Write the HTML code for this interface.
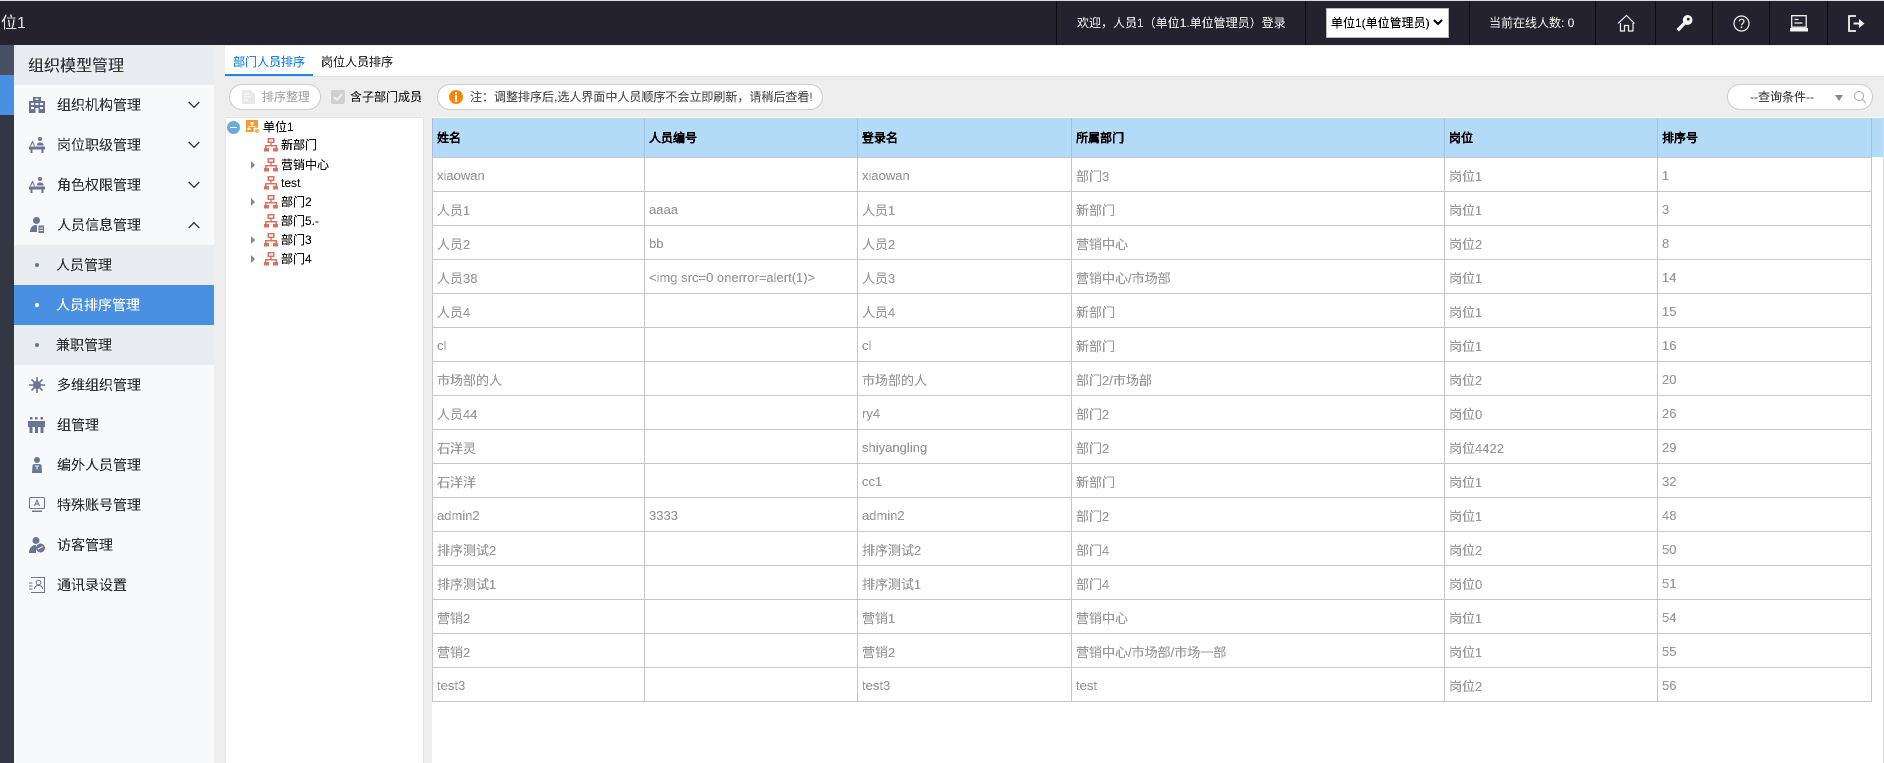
<!DOCTYPE html>
<html><head><meta charset="utf-8"><style>
*{box-sizing:border-box}
html,body{margin:0;padding:0;width:1884px;height:763px;overflow:hidden;background:#eee;font:12px "Liberation Sans","WenQuanYi Zen Hei",sans-serif;color:#222}
.a{position:absolute;white-space:nowrap}
.f,.t,th span,td span,.m span{filter:url(#aa)}
.v{position:absolute;top:1px;height:44px;width:1px;background:#0c0c12}
.m{position:absolute;left:14px;width:200px;height:40px;line-height:40px;font-size:14px;color:#333;background:#f8f9fb;padding-left:43px}
.m span{display:inline-block}
.m.s{background:#e9ecf1;font-size:14px;padding-left:42px}
.m.s:before{content:"";position:absolute;left:21px;top:18px;width:4px;height:4px;border-radius:2px;background:#6c7493}
.m.on{background:#4a90e2;color:#fff}.m.on:before{background:#fff}
.m svg.i{position:absolute;left:15px;top:12px}
.m svg.c{position:absolute;left:174px;top:16px}
.pill{position:absolute;top:84px;height:26px;border:1px solid #ccc;border-radius:13px;background:#fff;line-height:24px}
.t{position:absolute;line-height:19px;height:19px;color:#111}
.ic{position:absolute;left:264px}
.tri{position:absolute;left:251px;width:0;height:0;border-left:4px solid #888;border-top:4px solid transparent;border-bottom:4px solid transparent}
table{position:absolute;left:432px;top:118px;width:1439px;border-collapse:collapse;table-layout:fixed}
th{height:39px;border-right:1px solid #a4bfe0;border-left:1px solid #a4bfe0;text-align:left;font-size:12px;padding:1px 0 0 4px;color:#000;font-weight:bold}
td{height:34px;border:1px solid #c6c6c6;padding:3px 0 0 4px;color:#999;font-size:13px;white-space:nowrap}
</style></head><body>
<svg width="0" height="0" style="position:absolute"><defs>
<filter id="aa" x="0" y="0" width="100%" height="100%" color-interpolation-filters="sRGB"><feComponentTransfer><feFuncA type="discrete" tableValues="0 1 1"/></feComponentTransfer></filter>
<symbol id="org" viewBox="0 0 14 14"><path d="M3.500 0h7v5h-7zM5 1.500v2h4v-2zM6.300 5h1.400v2H13v3h-1.500V8.500h-9V10H1V7h5.300zM0 10h5v3.500H0zM9 10h5v3.500H9z" fill="#d9725f" fill-rule="evenodd"/></symbol>
<symbol id="dn" viewBox="0 0 12 8"><path d="M0.700 1l5.300 5.300 5.300-5.300" fill="none" stroke="#333" stroke-width="1.300"/></symbol>
<symbol id="up" viewBox="0 0 12 8"><path d="M0.700 7l5.300-5.300 5.300 5.300" fill="none" stroke="#333" stroke-width="1.300"/></symbol>
<symbol id="desk" viewBox="0 0 16 16"><circle cx="11" cy="2" r="2" fill="#6c7493"/><path d="M8 8.500c0-2.500 1-3 3-3s3.500.5 3.500 3zM0 9.500h16v3h-1.500V16h-2v-3.500h-9V16h-2v-3.500H0z" fill="#6c7493"/><path d="M1.500 9l2-4.500 2 4.500" fill="none" stroke="#6c7493"/></symbol>
</defs></svg>

<div class="a" style="left:0;top:0;width:1884px;height:45px;background:#23222e;border-top:1px solid #ddd"></div>
<div class="a f" style="left:1px;top:14px;font-size:16px;line-height:20px;color:#ddd">位1</div>
<div class="v" style="left:1056px"></div><div class="v" style="left:1305px"></div><div class="v" style="left:1469px"></div><div class="v" style="left:1595px"></div><div class="v" style="left:1655px"></div><div class="v" style="left:1712px"></div><div class="v" style="left:1769px"></div><div class="v" style="left:1827px"></div>
<div class="a f" style="left:1077px;top:15px;line-height:16px;color:#ddd;font-size:12px">欢迎，人员1（单位1.单位管理员）登录</div>
<div class="a" style="left:1326px;top:8px;width:123px;height:30px;background:#fff;border:1px solid #bbb"></div>
<div class="a f" style="left:1331px;top:15px;color:#000;line-height:16px">单位1(单位管理员)</div>
<svg class="a" style="left:1433px;top:19px" width="10" height="7" viewBox="0 0 10 7"><path d="M1 1l4 4 4-4" fill="none" stroke="#000" stroke-width="2"/></svg>
<div class="a f" style="left:1489px;top:15px;line-height:16px;color:#ddd">当前在线人数: 0</div>
<svg class="a" style="left:1617px;top:14px" width="19" height="18" viewBox="0 0 19 18"><path d="M1 9.500L9.500 1.500l8 8M3.500 9v8h4v-5.500h4V17h4.500V9" fill="none" stroke="#f2f2f2" stroke-width="1.200"/></svg>
<svg class="a" style="left:1676px;top:15px" width="17" height="17" viewBox="0 0 17 17"><path d="M11.500 0A5 5 0 0 1 16.500 5 5 5 0 0 1 9.500 9.500L3 16.500.5 14l6.800-6.800A5 5 0 0 1 11.500 0z" fill="#f6f6f6"/><circle cx="12.300" cy="4.200" r="1.400" fill="#23222e"/></svg>
<svg class="a" style="left:1733px;top:15px" width="17" height="17" viewBox="0 0 17 17"><circle cx="8.500" cy="8.500" r="7.500" fill="none" stroke="#f2f2f2" stroke-width="1.200"/><path d="M6.200 6.500c0-3 4.800-3 4.800-.2 0 2-2.400 1.900-2.400 3.900" fill="none" stroke="#f2f2f2" stroke-width="1.200"/><circle cx="8.500" cy="12.300" r=".9" fill="#f2f2f2"/></svg>
<svg class="a" style="left:1790px;top:15px" width="18" height="17" viewBox="0 0 18 17"><path d="M1.700.7h14.500v11.500H1.700zM4.500 4.500h4M4.500 8h8" fill="none" stroke="#f2f2f2" stroke-width="1.300"/><path d="M0 13h18v3.500H0z" fill="#f2f2f2"/></svg>
<svg class="a" style="left:1848px;top:15px" width="17" height="17" viewBox="0 0 17 17"><path d="M8 1H1v15h7" fill="none" stroke="#f2f2f2" stroke-width="1.800"/><path d="M5.500 7.500h5.500V4l5.500 4.500-5.500 4.500V9.500H5.500z" fill="#f2f2f2"/></svg>

<div class="a" style="left:0;top:45px;width:14px;height:718px;background:#333744"></div>
<div class="a" style="left:0;top:45px;width:14px;height:30px;background:#4a5064"></div>
<div class="a" style="left:0;top:75px;width:14px;height:40px;background:#4a90e2"></div>
<div class="a" style="left:14px;top:45px;width:200px;height:718px;background:#f8f9fb"></div>
<div class="a" style="left:14px;top:45px;width:200px;height:40px;background:#e9ecf1"></div>
<div class="a f" style="left:28px;top:47px;font-size:16px;line-height:40px;color:#333">组织模型管理</div>

<div class="m" style="top:85px"><svg class="i" width="16" height="16" viewBox="0 0 16 16"><path d="M4 0h8v4h4v12H0V4h4zM6.500 1.500V3h3V1.500zM2 6v2h3V6zM11 6v2h3V6zM6.500 6v2h3V6zM2 10v2h3v-2zM11 10v2h3v-2zM6.500 11v5h3v-5z" fill="#6c7493" fill-rule="evenodd"/></svg><span>组织机构管理</span><svg class="c" width="12" height="8"><use href="#dn"/></svg></div>
<div class="m" style="top:125px"><svg class="i" width="16" height="16"><use href="#desk"/></svg><span>岗位职级管理</span><svg class="c" width="12" height="8"><use href="#dn"/></svg></div>
<div class="m" style="top:165px"><svg class="i" width="16" height="16"><use href="#desk"/></svg><span>角色权限管理</span><svg class="c" width="12" height="8"><use href="#dn"/></svg></div>
<div class="m" style="top:205px"><svg class="i" width="16" height="16" viewBox="0 0 16 16"><circle cx="7.500" cy="3.500" r="3.500" fill="#6c7493"/><path d="M1 15c0-4 2-7 6-7 .5 0 1 .3 1 1v6zM9.500 8.500H15V16H9.500z" fill="#6c7493"/><path d="M10.500 11h3.500M10.500 13.500h3.500" stroke="#f8f9fb"/></svg><span>人员信息管理</span><svg class="c" width="12" height="8"><use href="#up"/></svg></div>
<div class="m s" style="top:245px"><span>人员管理</span></div>
<div class="m s on" style="top:285px"><span>人员排序管理</span></div>
<div class="m s" style="top:325px"><span>兼职管理</span></div>
<div class="m" style="top:365px"><svg class="i" width="16" height="16" viewBox="0 0 16 16"><circle cx="8" cy="8" r="4" fill="#6c7493"/><path d="M8 0v16M0 8h16M2.500 2.500l11 11M13.500 2.500l-11 11" stroke="#6c7493" stroke-width="1.600"/></svg><span>多维组织管理</span></div>
<div class="m" style="top:405px"><svg class="i" style="left:14px" width="17" height="16" viewBox="0 0 17 16"><path d="M2 0h2.500v2.500H2zM7 0h2.500v2.500H7zM12.500 0H15v2.500h-2.500zM0 4h17v6h-1.500v6h-3v-6h-2.500v6H7v-6H4.500v6h-3v-6H0z" fill="#6c7493"/></svg><span>组管理</span></div>
<div class="m" style="top:445px"><svg class="i" width="16" height="16" viewBox="0 0 16 16"><circle cx="8" cy="3" r="3" fill="#6c7493"/><path d="M3 16l.5-7.500c0-1 1-1.500 2.500-1.500h4c1.500 0 2.500.5 2.500 1.500L13 16z" fill="#6c7493"/><path d="M6 9h4M8 9v3.500" stroke="#f8f9fb"/></svg><span>编外人员管理</span></div>
<div class="m" style="top:485px"><svg class="i" width="16" height="16" viewBox="0 0 16 16"><rect x=".5" y=".5" width="15" height="11" rx="1.500" fill="none" stroke="#6c7493"/><path d="M5.500 9L8 3l2.500 6M6.500 7h3" fill="none" stroke="#6c7493"/><path d="M3 13.500h10V15H3z" fill="#6c7493"/></svg><span>特殊账号管理</span></div>
<div class="m" style="top:525px"><svg class="i" width="16" height="16" viewBox="0 0 16 16"><circle cx="7" cy="3.500" r="3.500" fill="#6c7493"/><path d="M0 16c0-5 3-8 7-8v8z" fill="#6c7493"/><circle cx="11.500" cy="11" r="4.500" fill="#6c7493"/><path d="M9 12l5-2.500" stroke="#f8f9fb"/></svg><span>访客管理</span></div>
<div class="m" style="top:565px"><svg class="i" width="16" height="16" viewBox="0 0 16 16"><path d="M2 .5h13.500v15H2M0 6h3.500M0 9h3.500M0 12h3.500" fill="none" stroke="#6c7493"/><circle cx="9.500" cy="5.500" r="2.300" fill="none" stroke="#6c7493"/><path d="M5.500 12c0-2.500 1.500-3.500 4-3.500s4 1 4 3.500" fill="none" stroke="#6c7493"/></svg><span>通讯录设置</span></div>

<div class="a" style="left:225px;top:46px;width:1659px;height:31px;background:#fff;border-bottom:1px solid #e0e0e0"></div>
<div class="a f" style="left:233px;top:54px;line-height:16px;color:#1e88e5">部门人员排序</div>
<div class="a" style="left:225px;top:74px;width:88px;height:2px;background:#1e88e5"></div>
<div class="a f" style="left:321px;top:54px;line-height:16px;color:#333">岗位人员排序</div>

<div class="pill" style="left:229px;width:92px"></div>
<svg class="a" style="left:242px;top:90px" width="13" height="14" viewBox="0 0 13 14"><path d="M0 0h9l4 4v10H0z" fill="#e9e9e9"/><path d="M2 4h5M2 7h7M2 10h4" stroke="#fff"/></svg>
<div class="a f" style="left:262px;top:89px;line-height:16px;color:#aaa">排序整理</div>
<div class="a" style="left:331px;top:90px;width:14px;height:14px;background:#cfcfcf;border-radius:2px"></div>
<svg class="a" style="left:331px;top:90px" width="14" height="14"><path d="M3 7l3 3 5-6" fill="none" stroke="#eee" stroke-width="2"/></svg>
<div class="a f" style="left:350px;top:89px;line-height:16px;color:#222">含子部门成员</div>
<div class="pill" style="left:437px;width:386px"></div>
<div class="a" style="left:449px;top:90px;width:14px;height:14px;border-radius:7px;background:#fb8500"></div>
<div class="a" style="left:455px;top:92px;width:2px;height:2px;background:#fff"></div>
<div class="a" style="left:455px;top:95px;width:2px;height:7px;background:#fff"></div>
<div class="a f" style="left:470px;top:89px;line-height:16px;color:#555">注：调整排序后,选人界面中人员顺序不会立即刷新，请稍后查看!</div>
<div class="pill" style="left:1727px;width:146px"></div>
<div class="a f" style="left:1750px;top:89px;line-height:16px;color:#444">--查询条件--</div>
<div class="a" style="left:1835px;top:95px;width:0;height:0;border-top:6px solid #888;border-left:4px solid transparent;border-right:4px solid transparent"></div>
<svg class="a" style="left:1853px;top:90px" width="14" height="14" viewBox="0 0 14 14"><circle cx="6" cy="6" r="4.500" fill="none" stroke="#aaa"/><path d="M9.500 9.500l3.500 3.500" stroke="#aaa"/></svg>

<div class="a" style="left:225px;top:117px;width:199px;height:646px;background:#fff;border:1px solid #e4e4e4;border-bottom:0"></div>
<div class="a" style="left:227px;top:121px;width:13px;height:13px;border-radius:7px;background:#6aa9dc"></div>
<div class="a" style="left:230px;top:127px;width:7px;height:1px;background:#fff"></div>
<svg class="a" style="left:246px;top:120px" width="14" height="14" viewBox="0 0 14 14"><path d="M0 0h12v12H0z" fill="#f79a2c"/><path d="M4.500 2h3v2.500h-3zM5.700 4.500h.7V6h3.100v2h-.7V6.700H3.300V8h-.7V6h3.100zM1.500 8h3v2h-3zM7.500 8h3v2h-3z" fill="#fff"/><circle cx="11" cy="11" r="2.800" fill="#f9b766" stroke="#fff"/></svg>
<div class="t" style="left:263px;top:118px">单位1</div>
<svg class="ic" style="top:138px" width="14" height="14"><use href="#org"/></svg><div class="t" style="left:281px;top:136px">新部门</div>
<i class="tri" style="top:161px"></i><svg class="ic" style="top:158px" width="14" height="14"><use href="#org"/></svg><div class="t" style="left:281px;top:156px">营销中心</div>
<svg class="ic" style="top:176px" width="14" height="14"><use href="#org"/></svg><div class="t" style="left:281px;top:174px">test</div>
<i class="tri" style="top:198px"></i><svg class="ic" style="top:195px" width="14" height="14"><use href="#org"/></svg><div class="t" style="left:281px;top:193px">部门2</div>
<svg class="ic" style="top:214px" width="14" height="14"><use href="#org"/></svg><div class="t" style="left:281px;top:212px">部门5.-</div>
<i class="tri" style="top:236px"></i><svg class="ic" style="top:233px" width="14" height="14"><use href="#org"/></svg><div class="t" style="left:281px;top:231px">部门3</div>
<i class="tri" style="top:255px"></i><svg class="ic" style="top:252px" width="14" height="14"><use href="#org"/></svg><div class="t" style="left:281px;top:250px">部门4</div>

<div class="a" style="left:432px;top:117px;width:1452px;height:646px;background:#fff;border-right:1px solid #ddd"></div>
<div class="a" style="left:432px;top:118px;width:1451px;height:39px;background:#b3dbf7"></div>
<table><colgroup><col style="width:212px"><col style="width:213px"><col style="width:214px"><col style="width:373px"><col style="width:213px"><col style="width:214px"></colgroup>
<tr><th><span>姓名</span></th><th><span>人员编号</span></th><th><span>登录名</span></th><th><span>所属部门</span></th><th><span>岗位</span></th><th><span>排序号</span></th></tr>
<tr><td><span>xiaowan</span></td><td></td><td><span>xiaowan</span></td><td><span>部门3</span></td><td><span>岗位1</span></td><td><span>1</span></td></tr>
<tr><td><span>人员1</span></td><td><span>aaaa</span></td><td><span>人员1</span></td><td><span>新部门</span></td><td><span>岗位1</span></td><td><span>3</span></td></tr>
<tr><td><span>人员2</span></td><td><span>bb</span></td><td><span>人员2</span></td><td><span>营销中心</span></td><td><span>岗位2</span></td><td><span>8</span></td></tr>
<tr><td><span>人员38</span></td><td><span>&lt;img src=0 onerror=alert(1)&gt;</span></td><td><span>人员3</span></td><td><span>营销中心/市场部</span></td><td><span>岗位1</span></td><td><span>14</span></td></tr>
<tr><td><span>人员4</span></td><td></td><td><span>人员4</span></td><td><span>新部门</span></td><td><span>岗位1</span></td><td><span>15</span></td></tr>
<tr><td><span>cl</span></td><td></td><td><span>cl</span></td><td><span>新部门</span></td><td><span>岗位1</span></td><td><span>16</span></td></tr>
<tr><td><span>市场部的人</span></td><td></td><td><span>市场部的人</span></td><td><span>部门2/市场部</span></td><td><span>岗位2</span></td><td><span>20</span></td></tr>
<tr><td><span>人员44</span></td><td></td><td><span>ry4</span></td><td><span>部门2</span></td><td><span>岗位0</span></td><td><span>26</span></td></tr>
<tr><td><span>石洋灵</span></td><td></td><td><span>shiyangling</span></td><td><span>部门2</span></td><td><span>岗位4422</span></td><td><span>29</span></td></tr>
<tr><td><span>石洋洋</span></td><td></td><td><span>cc1</span></td><td><span>新部门</span></td><td><span>岗位1</span></td><td><span>32</span></td></tr>
<tr><td><span>admin2</span></td><td><span>3333</span></td><td><span>admin2</span></td><td><span>部门2</span></td><td><span>岗位1</span></td><td><span>48</span></td></tr>
<tr><td><span>排序测试2</span></td><td></td><td><span>排序测试2</span></td><td><span>部门4</span></td><td><span>岗位2</span></td><td><span>50</span></td></tr>
<tr><td><span>排序测试1</span></td><td></td><td><span>排序测试1</span></td><td><span>部门4</span></td><td><span>岗位0</span></td><td><span>51</span></td></tr>
<tr><td><span>营销2</span></td><td></td><td><span>营销1</span></td><td><span>营销中心</span></td><td><span>岗位1</span></td><td><span>54</span></td></tr>
<tr><td><span>营销2</span></td><td></td><td><span>营销2</span></td><td><span>营销中心/市场部/市场一部</span></td><td><span>岗位1</span></td><td><span>55</span></td></tr>
<tr><td><span>test3</span></td><td></td><td><span>test3</span></td><td><span>test</span></td><td><span>岗位2</span></td><td><span>56</span></td></tr>
</table>
</body></html>
